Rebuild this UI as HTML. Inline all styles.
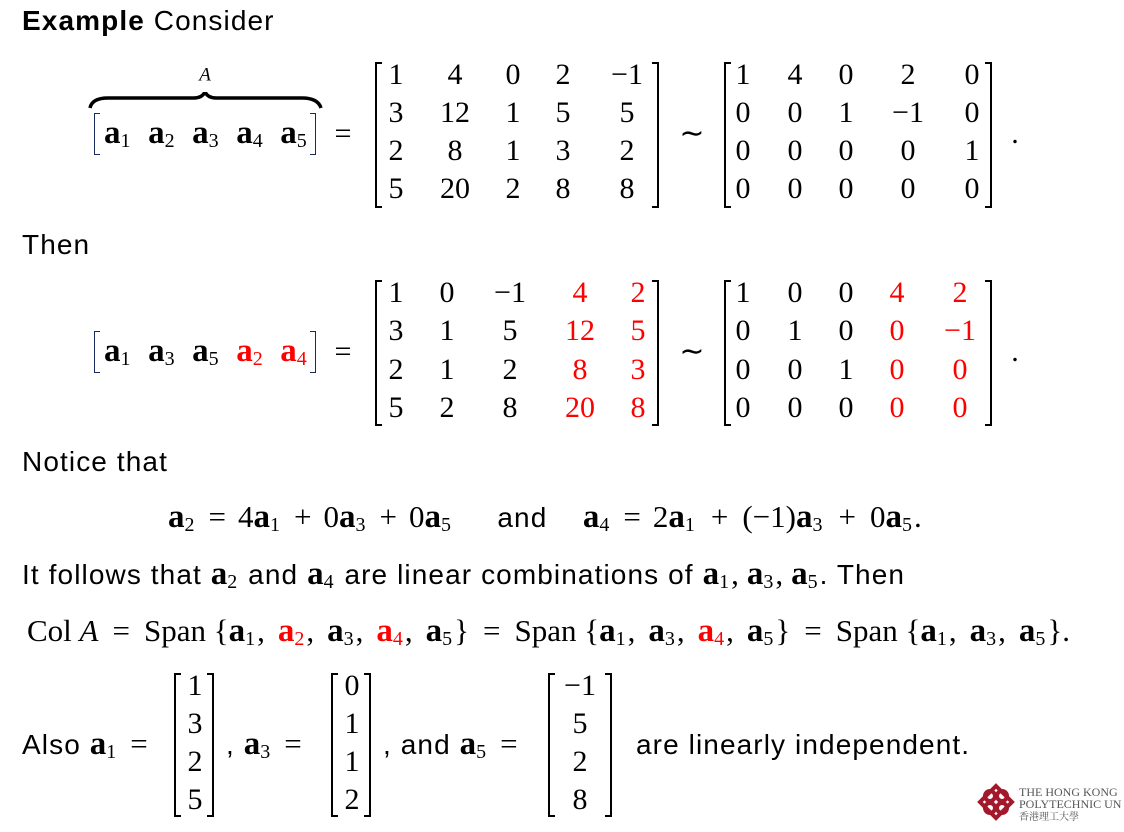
<!DOCTYPE html>
<html><head><meta charset="utf-8"><style>
body{margin:0;width:1124px;height:832px;background:#fff;position:relative;overflow:hidden;color:#000}
.t{position:absolute;white-space:nowrap;font-family:"Liberation Sans",sans-serif;font-size:28px;letter-spacing:1.1px;line-height:1;transform:translateY(-50%)}
.m{font-family:"Liberation Serif",serif;font-size:31px;letter-spacing:0}
.n{position:absolute;font-family:"Liberation Serif",serif;font-size:30px;line-height:1;transform:translate(-50%,-50%);white-space:nowrap}
b.a{font-family:"Liberation Serif",serif;font-weight:bold;font-size:33px;letter-spacing:0}
sub{font-size:20px;vertical-align:-4px;font-weight:normal;font-family:"Liberation Serif",serif;letter-spacing:0;margin-right:2px}
.o{margin:0 12px;font-family:"Liberation Serif",serif;font-size:31px;letter-spacing:0}
.c{margin-right:8px}
.col .c{margin-right:13px}
.col .o{margin:0 14px}
.r{color:#f00}
.bl,.br{position:absolute;border:2.5px solid #000;width:7px;box-sizing:border-box}
.bl{border-right:none}.br{border-left:none}
.vb{border-color:#1a2a5a;border-width:1.5px}
</style></head><body>
<div class="t" style="left:22px;top:21px"><b>Example</b> Consider</div>

<div class="n" style="left:205px;top:75px;font-style:italic;font-size:19px">A</div>
<svg style="position:absolute;left:88px;top:92px" width="236" height="20"><path d="M2 16 Q4 6 20 6 L106 6 Q114 6 117 0 Q120 6 128 6 L214 6 Q230 6 233 16" fill="none" stroke="#000" stroke-width="3.5"/></svg>
<div class="bl vb" style="left:94px;top:113px;height:42px;width:6px"></div>
<div class="br vb" style="left:310px;top:113px;height:42px;width:6px"></div>
<div class="t" style="left:104px;top:134px;letter-spacing:0"><b class="a">a</b><sub>1</sub>&nbsp;&nbsp;<b class="a">a</b><sub>2</sub>&nbsp;&nbsp;<b class="a">a</b><sub>3</sub>&nbsp;&nbsp;<b class="a">a</b><sub>4</sub>&nbsp;&nbsp;<b class="a">a</b><sub>5</sub></div>
<div class="n" style="left:343px;top:134px">=</div>

<div class="bl" style="left:375px;top:62px;height:146px"></div>
<div class="br" style="left:652px;top:62px;height:146px"></div>
<div class="n" style="left:396px;top:75px">1</div><div class="n" style="left:455px;top:75px">4</div><div class="n" style="left:513px;top:75px">0</div><div class="n" style="left:563px;top:75px">2</div><div class="n" style="left:627px;top:75px">−1</div>
<div class="n" style="left:396px;top:113px">3</div><div class="n" style="left:455px;top:113px">12</div><div class="n" style="left:513px;top:113px">1</div><div class="n" style="left:563px;top:113px">5</div><div class="n" style="left:627px;top:113px">5</div>
<div class="n" style="left:396px;top:151px">2</div><div class="n" style="left:455px;top:151px">8</div><div class="n" style="left:513px;top:151px">1</div><div class="n" style="left:563px;top:151px">3</div><div class="n" style="left:627px;top:151px">2</div>
<div class="n" style="left:396px;top:189px">5</div><div class="n" style="left:455px;top:189px">20</div><div class="n" style="left:513px;top:189px">2</div><div class="n" style="left:563px;top:189px">8</div><div class="n" style="left:627px;top:189px">8</div>
<div class="n" style="left:692px;top:134px">∼</div>
<div class="bl" style="left:724px;top:62px;height:146px"></div>
<div class="br" style="left:985px;top:62px;height:146px"></div>
<div class="n" style="left:743px;top:75px">1</div><div class="n" style="left:795px;top:75px">4</div><div class="n" style="left:846px;top:75px">0</div><div class="n" style="left:908px;top:75px">2</div><div class="n" style="left:972px;top:75px">0</div>
<div class="n" style="left:743px;top:113px">0</div><div class="n" style="left:795px;top:113px">0</div><div class="n" style="left:846px;top:113px">1</div><div class="n" style="left:908px;top:113px">−1</div><div class="n" style="left:972px;top:113px">0</div>
<div class="n" style="left:743px;top:151px">0</div><div class="n" style="left:795px;top:151px">0</div><div class="n" style="left:846px;top:151px">0</div><div class="n" style="left:908px;top:151px">0</div><div class="n" style="left:972px;top:151px">1</div>
<div class="n" style="left:743px;top:189px">0</div><div class="n" style="left:795px;top:189px">0</div><div class="n" style="left:846px;top:189px">0</div><div class="n" style="left:908px;top:189px">0</div><div class="n" style="left:972px;top:189px">0</div>
<div class="n" style="left:1015px;top:134px">.</div>

<div class="t" style="left:22px;top:245px">Then</div>

<div class="bl vb" style="left:94px;top:331px;height:42px;width:6px"></div>
<div class="br vb" style="left:310px;top:331px;height:42px;width:6px"></div>
<div class="t" style="left:104px;top:352px;letter-spacing:0"><b class="a">a</b><sub>1</sub>&nbsp;&nbsp;<b class="a">a</b><sub>3</sub>&nbsp;&nbsp;<b class="a">a</b><sub>5</sub>&nbsp;&nbsp;<span class="r"><b class="a">a</b><sub>2</sub>&nbsp;&nbsp;<b class="a">a</b><sub>4</sub></span></div>
<div class="n" style="left:343px;top:352px">=</div>
<div class="bl" style="left:375px;top:280px;height:146px"></div>
<div class="br" style="left:652px;top:280px;height:146px"></div>
<div class="n" style="left:396px;top:293px">1</div><div class="n" style="left:447px;top:293px">0</div><div class="n" style="left:510px;top:293px">−1</div><div class="n r" style="left:580px;top:293px">4</div><div class="n r" style="left:638px;top:293px">2</div>
<div class="n" style="left:396px;top:331px">3</div><div class="n" style="left:447px;top:331px">1</div><div class="n" style="left:510px;top:331px">5</div><div class="n r" style="left:580px;top:331px">12</div><div class="n r" style="left:638px;top:331px">5</div>
<div class="n" style="left:396px;top:370px">2</div><div class="n" style="left:447px;top:370px">1</div><div class="n" style="left:510px;top:370px">2</div><div class="n r" style="left:580px;top:370px">8</div><div class="n r" style="left:638px;top:370px">3</div>
<div class="n" style="left:396px;top:408px">5</div><div class="n" style="left:447px;top:408px">2</div><div class="n" style="left:510px;top:408px">8</div><div class="n r" style="left:580px;top:408px">20</div><div class="n r" style="left:638px;top:408px">8</div>
<div class="n" style="left:692px;top:352px">∼</div>
<div class="bl" style="left:724px;top:280px;height:146px"></div>
<div class="br" style="left:985px;top:280px;height:146px"></div>
<div class="n" style="left:743px;top:293px">1</div><div class="n" style="left:795px;top:293px">0</div><div class="n" style="left:846px;top:293px">0</div><div class="n r" style="left:897px;top:293px">4</div><div class="n r" style="left:960px;top:293px">2</div>
<div class="n" style="left:743px;top:331px">0</div><div class="n" style="left:795px;top:331px">1</div><div class="n" style="left:846px;top:331px">0</div><div class="n r" style="left:897px;top:331px">0</div><div class="n r" style="left:960px;top:331px">−1</div>
<div class="n" style="left:743px;top:370px">0</div><div class="n" style="left:795px;top:370px">0</div><div class="n" style="left:846px;top:370px">1</div><div class="n r" style="left:897px;top:370px">0</div><div class="n r" style="left:960px;top:370px">0</div>
<div class="n" style="left:743px;top:408px">0</div><div class="n" style="left:795px;top:408px">0</div><div class="n" style="left:846px;top:408px">0</div><div class="n r" style="left:897px;top:408px">0</div><div class="n r" style="left:960px;top:408px">0</div>
<div class="n" style="left:1015px;top:352px">.</div>

<div class="t" style="left:22px;top:462px">Notice that</div>

<div class="t" style="left:168px;top:518px"><span class="m"><b class="a">a</b><sub>2</sub><span class="o">=</span>4<b class="a">a</b><sub>1</sub><span class="o">+</span>0<b class="a">a</b><sub>3</sub><span class="o">+</span>0<b class="a">a</b><sub>5</sub></span>&nbsp;&nbsp;&nbsp;&nbsp;&nbsp;and&nbsp;&nbsp;&nbsp;&nbsp;<span class="m"><b class="a">a</b><sub>4</sub><span class="o">=</span>2<b class="a">a</b><sub>1</sub><span class="o" style="margin:0 14px">+</span>(−1)<b class="a">a</b><sub>3</sub><span class="o" style="margin:0 14px">+</span>0<b class="a">a</b><sub>5</sub>.</span></div>

<div class="t" style="left:22px;top:575px">It follows that <b class="a">a</b><sub>2</sub> and <b class="a">a</b><sub>4</sub> are linear combinations of <span class="m"><b class="a">a</b><sub>1</sub>,<span class="c"></span><b class="a">a</b><sub>3</sub>,<span class="c"></span><b class="a">a</b><sub>5</sub></span>. Then</div>

<div class="t m col" style="left:27px;top:632px">Col <i>A</i><span class="o">=</span>Span {<b class="a">a</b><sub>1</sub>,<span class="c"></span><span class="r"><b class="a">a</b><sub>2</sub></span>,<span class="c"></span><b class="a">a</b><sub>3</sub>,<span class="c"></span><span class="r"><b class="a">a</b><sub>4</sub></span>,<span class="c"></span><b class="a">a</b><sub>5</sub>}<span class="o">=</span>Span {<b class="a">a</b><sub>1</sub>,<span class="c"></span><b class="a">a</b><sub>3</sub>,<span class="c"></span><span class="r"><b class="a">a</b><sub>4</sub></span>,<span class="c"></span><b class="a">a</b><sub>5</sub>}<span class="o">=</span>Span {<b class="a">a</b><sub>1</sub>,<span class="c"></span><b class="a">a</b><sub>3</sub>,<span class="c"></span><b class="a">a</b><sub>5</sub>}.</div>

<div class="t" style="left:22px;top:745px">Also <b class="a">a</b><sub>1</sub><span class="o">=</span></div>
<div class="bl" style="left:174px;top:673px;height:144px"></div>
<div class="br" style="left:207px;top:673px;height:144px"></div>
<div class="n" style="left:195px;top:686px">1</div><div class="n" style="left:195px;top:724px">3</div><div class="n" style="left:195px;top:762px">2</div><div class="n" style="left:195px;top:800px">5</div>
<div class="t" style="left:226px;top:745px">, <b class="a">a</b><sub>3</sub><span class="o">=</span></div>
<div class="bl" style="left:331px;top:673px;height:144px"></div>
<div class="br" style="left:364px;top:673px;height:144px"></div>
<div class="n" style="left:352px;top:686px">0</div><div class="n" style="left:352px;top:724px">1</div><div class="n" style="left:352px;top:762px">1</div><div class="n" style="left:352px;top:800px">2</div>
<div class="t" style="left:383px;top:745px">, and <b class="a">a</b><sub>5</sub><span class="o">=</span></div>
<div class="bl" style="left:548px;top:673px;height:144px"></div>
<div class="br" style="left:605px;top:673px;height:144px"></div>
<div class="n" style="left:580px;top:686px">−1</div><div class="n" style="left:580px;top:724px">5</div><div class="n" style="left:580px;top:762px">2</div><div class="n" style="left:580px;top:800px">8</div>
<div class="t" style="left:636px;top:745px">are linearly independent.</div>

<svg style="position:absolute;left:977px;top:783px" width="38" height="38" viewBox="0 0 38 38"><g fill="none" stroke="#a3182a" stroke-width="4"><path d="M19 3 L35 19 L19 35 L3 19 Z"/><circle cx="13" cy="13" r="5"/><circle cx="25" cy="13" r="5"/><circle cx="13" cy="25" r="5"/><circle cx="25" cy="25" r="5"/></g></svg>
<div style="position:absolute;left:1019px;top:786px;font-family:'Liberation Serif',serif;font-size:12px;line-height:12px;color:#555;white-space:nowrap">THE HONG KONG<br>POLYTECHNIC UN<br><span style="font-family:'Noto Serif CJK SC',serif;font-size:10px">香港理工大學</span></div>
</body></html>
